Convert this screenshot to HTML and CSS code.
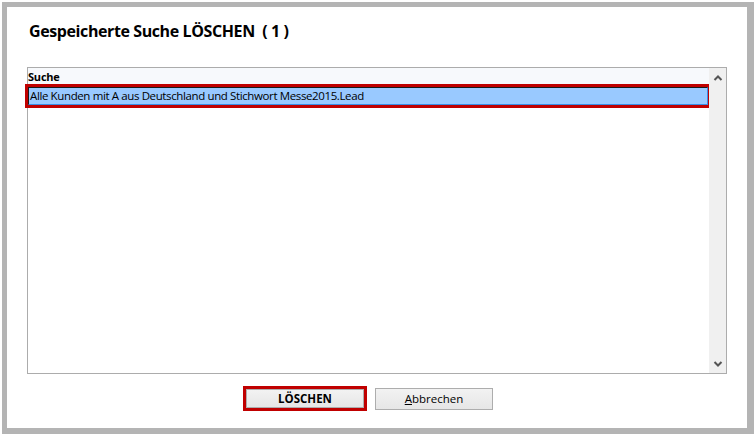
FILE: index.html
```html
<!DOCTYPE html>
<html lang="de">
<head>
<meta charset="utf-8">
<link rel="stylesheet" href="styles.css">
</head>
<body>
<div class="frame">
  <h1 class="title">Gespeicherte Suche LÖSCHEN&nbsp; ( 1 )</h1>
  <div class="listbox">
    <div class="list-content">
      <div class="list-header">Suche</div>
      <div class="list-row selected">Alle Kunden mit A aus Deutschland und Stichwort Messe2015.Lead</div>
    </div>
    <div class="scrollbar">
      <svg class="chev" width="10" height="8" viewBox="0 0 10 8"><path d="M1.5 6 L5 2.5 L8.5 6" fill="none" stroke="#555" stroke-width="2"/></svg>
      <svg class="chev" width="10" height="8" viewBox="0 0 10 8"><path d="M1.5 2 L5 5.5 L8.5 2" fill="none" stroke="#555" stroke-width="2"/></svg>
    </div>
  </div>
  <div class="buttons">
    <button class="btn btn-primary">LÖSCHEN</button>
    <button class="btn"><span class="u">A</span>bbrechen</button>
  </div>
</div>
</body>
</html>
```

FILE: styles.css
```css
* { box-sizing: border-box; }
html, body { margin: 0; padding: 0; background: #ffffff; }
body {
  width: 754px;
  height: 434px;
  overflow: hidden;
  font-family: "Open Sans", "Noto Sans", sans-serif;
  color: #000;
}
.frame {
  margin: 2px 0 0 2px;
  width: 752px;
  height: 432px;
  border-style: solid;
  border-color: #b4b4b4;
  border-width: 5px 7px 6px 5px;
  box-shadow: 0 1px 0 #6e6e6e;
  background: #fff;
  display: flex;
  flex-direction: column;
  padding: 0 20px 0 20px;
}
.title {
  margin: 14px 0 0 2px;
  font-size: 16px;
  line-height: 21px;
  font-weight: 700;
  letter-spacing: -0.4px;
  white-space: pre;
}
.listbox {
  margin-top: 25px;
  width: 700px;
  height: 307px;
  border: 1px solid #acacac;
  display: flex;
}
.list-content {
  flex: 1;
  display: flex;
  flex-direction: column;
}
.list-header {
  height: 16px;
  background: #f7f9fc;
  font-size: 11px;
  font-weight: 700;
  line-height: 16px;
  padding-top: 1px;
  letter-spacing: -0.2px;
}
.list-row {
  margin-top: 3px;
  margin-right: 1px;
  height: 18px;
  font-size: 11.5px;
  line-height: 16px;
  letter-spacing: -0.38px;
  padding-left: 1px;
  white-space: nowrap;
}
.list-row.selected {
  background: #99c9ff;
  border: 1px solid;
  border-color: #1a1a1a #3a8ee6 #3a8ee6 #1a1a1a;
  outline: 3px solid #c00000;
}
.scrollbar {
  width: 17px;
  background: #f0f0f0;
  display: flex;
  flex-direction: column;
  justify-content: space-between;
  align-items: center;
  padding: 6px 0 5px 0;
}
.chev { display: block; }
.buttons {
  margin-top: 12px;
  display: flex;
  gap: 11px;
  padding-left: 216px;
  align-items: flex-start;
}
.btn {
  font-family: "Open Sans", "Noto Sans", sans-serif;
  font-size: 11.5px;
  width: 118px;
  height: 22px;
  margin-top: 2px;
  border: 1px solid #adadad;
  background: linear-gradient(#f2f2f2, #e6e6e6);
  color: #000;
  padding: 0;
  line-height: 18px;
}
.btn-primary {
  font-weight: 700;
  height: 19px;
  margin-top: 3px;
  margin-left: 3px;
  outline: 3px solid #c00000;
  outline-offset: 0;
}
.u { text-decoration: underline; }
```
